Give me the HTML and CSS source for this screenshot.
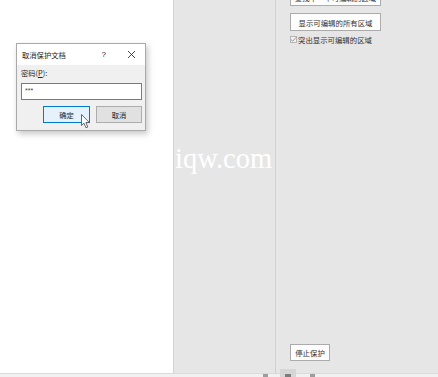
FILE: index.html
```html
<!DOCTYPE html>
<html lang="zh-CN">

<head>
    <meta charset="UTF-8">
    <title>取消保护文档</title>
    <link rel="stylesheet" href="styles.css">
</head>

<body>
    <div class="app">
        <div class="workspace">
            <div class="doc"></div>
            <div class="gutter"></div>
            <aside class="pane">
                <button class="pane-btn first">查找下一个可编辑的区域</button>
                <button class="pane-btn">显示可编辑的所有区域</button>
                <label class="check">
                    <span class="box">
                        <svg width="7" height="7" viewBox="0 0 7 7">
                            <path d="M1 3.6 L2.8 5.2 L6 1.4" fill="none" stroke="#8a8a8a" stroke-width="0.9" />
                        </svg>
                    </span>
                    突出显示可编辑的区域
                </label>
                <div class="spacer"></div>
                <button class="pane-btn stop">停止保护</button>
            </aside>
        </div>
        <div class="statusbar">
            <span class="sb-icon one"></span>
            <span class="sb-icon two active"></span>
            <span class="sb-icon three"></span>
        </div>

        <!-- 透かし -->
        <div class="watermark">iqw.com</div>

        <!-- ダイアログ -->
        <div class="dialog">
            <div class="dialog-title">
                <span class="title-text">取消保护文档</span>
                <span class="title-help">?</span>
                <span class="title-close">
                    <svg width="9" height="9" viewBox="0 0 9 9">
                        <path d="M1 1 L8 8 M8 1 L1 8" stroke="#333" stroke-width="0.9" />
                    </svg>
                </span>
            </div>
            <div class="dialog-body">
                <div class="field-label">密码(<u>P</u>):</div>
                <div class="field">***</div>
                <div class="actions">
                    <button class="dlg-btn primary">确定</button>
                    <button class="dlg-btn">取消</button>
                </div>
            </div>
        </div>

        <!-- マウスカーソル -->
        <svg class="cursor" width="10" height="15" viewBox="0 0 10 15">
            <path d="M0.5 0.5 L0.5 11.5 L3 9.2 L5 13.8 L6.8 13 L4.9 8.6 L8.4 8.6 Z" fill="#fff" stroke="#444" stroke-width="0.8" />
        </svg>
    </div>
</body>

</html>
```

FILE: styles.css
```css
* {
    box-sizing: border-box;
}

body {
    margin: 0;
    font-family: "Noto Sans CJK SC", "Noto Sans", sans-serif;
    background-color: #FFFFFF;
}

.app {
    position: relative;
    width: 438px;
    height: 377px;
    overflow: hidden;
    display: flex;
    flex-direction: column;
}

.workspace {
    flex: 1;
    display: flex;
    min-height: 0;
}

.doc {
    width: 173px;
    background-color: #FFFFFF;
}

.gutter {
    width: 103px;
    background-color: #E6E6E6;
    border-left: 1px solid #D2D2D2;
    border-right: 1px solid #D0D0D0;
}

.pane {
    flex: 1;
    display: flex;
    flex-direction: column;
    align-items: flex-start;
    padding: 0 0 12px 14px;
    background-color: #E6E6E6;
}

.pane-btn {
    height: 18px;
    padding: 0;
    width: 91px;
    font-family: inherit;
    font-size: 7.4px;
    color: #333333;
    white-space: nowrap;
    overflow: hidden;
    background-color: #FDFDFD;
    border: 1px solid #ABABAB;
    border-radius: 0;
}

.pane-btn.first {
    margin-top: -12px;
    margin-bottom: 7px;
}

.check {
    display: flex;
    align-items: center;
    gap: 1px;
    margin-top: 3px;
    font-size: 7.4px;
    color: #333333;
}

.box {
    display: flex;
    width: 7px;
    height: 7px;
    border: 1px solid #B4B4B4;
    background-color: #F4F4F4;
}

.box svg {
    margin: -1px;
}

.spacer {
    flex: 1;
}

.pane-btn.stop {
    width: 40px;
    height: 17px;
}

.statusbar {
    height: 4px;
    background-color: #F1F1F1;
    border-top: 1px solid #DADADA;
    display: flex;
    align-items: flex-start;
    padding-left: 263px;
}

.sb-icon {
    height: 3px;
    background-color: #9C9C9C;
}

.sb-icon.one {
    width: 5px;
}

.sb-icon.two {
    width: 6px;
    margin-left: 17px;
    background-color: #7C7C7C;
    box-shadow: 0 0 0 5px #D6D6D6;
}

.sb-icon.three {
    width: 5px;
    margin-left: 19px;
}

.watermark {
    position: absolute;
    left: 175px;
    top: 143px;
    font-family: "Liberation Serif", serif;
    font-size: 28.5px;
    color: #FFFFFF;
}

.dialog {
    position: absolute;
    left: 16px;
    top: 43px;
    width: 130px;
    height: 88px;
    border: 1px solid #A9A9A9;
    background-color: #F0F0F0;
    box-shadow: 2px 3px 6px rgba(0, 0, 0, 0.22);
    display: flex;
    flex-direction: column;
}

.dialog-title {
    height: 21px;
    background-color: #FFFFFF;
    display: flex;
    align-items: center;
    padding-left: 5px;
    font-size: 7.3px;
    color: #222222;
}

.title-text {
    flex: 1;
}

.title-help {
    font-family: "Liberation Sans", sans-serif;
    font-size: 8px;
    margin-right: 21px;
}

.title-close {
    display: flex;
    margin-right: 9px;
}

.dialog-body {
    flex: 1;
    padding: 3px 3px 0 4px;
}

.field-label {
    font-size: 7.3px;
    color: #222222;
    line-height: 10px;
}

.field {
    margin-top: 5px;
    height: 17px;
    background-color: #FFFFFF;
    border: 1px solid #7A7A7A;
    font-family: "Liberation Sans", sans-serif;
    font-size: 7px;
    color: #444444;
    padding: 3px 0 0 3px;
}

.actions {
    display: flex;
    justify-content: flex-end;
    gap: 6px;
    margin-top: 6px;
}

.dlg-btn {
    width: 46px;
    height: 17px;
    padding: 0;
    font-family: inherit;
    font-size: 7.3px;
    color: #222222;
    background-color: #E1E1E1;
    border: 1px solid #ADADAD;
    border-radius: 0;
}

.dlg-btn.primary {
    width: 47px;
    background-color: #E5F1FB;
    border-color: #0078D7;
}

.cursor {
    position: absolute;
    left: 81px;
    top: 114px;
}
```
